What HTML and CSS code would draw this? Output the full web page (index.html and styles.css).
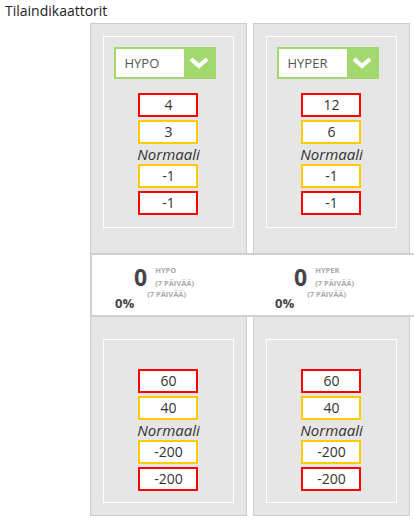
FILE: index.html
```html
<!DOCTYPE html>
<html lang="fi">
<head>
    <meta charset="UTF-8">
    <meta name="viewport" content="width=device-width, initial-scale=1.0">
    <title>Tilaindikaattorit</title>
    <link rel="stylesheet" href="styles.css">
</head>
<body>
    <div class="title">Tilaindikaattorit</div>

    <div class="board">
        <!-- Ylärivi: valinnat ja raja-arvot -->
        <div class="row">
            <div class="panel panel-top">
                <div class="inner inner-top">
                    <div class="select">
                        <span class="select-text">HYPO</span>
                        <span class="select-btn">
                            <svg width="20" height="12" viewBox="0 0 20 12"><polyline points="2,2 10,9 18,2" fill="none" stroke="#fff" stroke-width="4" stroke-linejoin="miter"/></svg>
                        </span>
                    </div>
                    <div class="limits">
                        <div class="limit red">4</div>
                        <div class="limit yellow">3</div>
                        <div class="normal">Normaali</div>
                        <div class="limit yellow">-1</div>
                        <div class="limit red">-1</div>
                    </div>
                </div>
            </div>
            <div class="panel panel-top">
                <div class="inner inner-top">
                    <div class="select">
                        <span class="select-text">HYPER</span>
                        <span class="select-btn">
                            <svg width="20" height="12" viewBox="0 0 20 12"><polyline points="2,2 10,9 18,2" fill="none" stroke="#fff" stroke-width="4" stroke-linejoin="miter"/></svg>
                        </span>
                    </div>
                    <div class="limits">
                        <div class="limit red">12</div>
                        <div class="limit yellow">6</div>
                        <div class="normal">Normaali</div>
                        <div class="limit yellow">-1</div>
                        <div class="limit red">-1</div>
                    </div>
                </div>
            </div>
        </div>

        <!-- Tilastorivi -->
        <div class="stats">
            <div class="stat">
                <div class="stat-main">
                    <span class="big">0</span>
                    <span class="labels">
                        <span>HYPO</span>
                        <span>(7 PÄIVÄÄ)</span>
                    </span>
                </div>
                <div class="stat-sub">
                    <span class="pct">0%</span>
                    <span class="small">(7 PÄIVÄÄ)</span>
                </div>
            </div>
            <div class="stat">
                <div class="stat-main">
                    <span class="big">0</span>
                    <span class="labels">
                        <span>HYPER</span>
                        <span>(7 PÄIVÄÄ)</span>
                    </span>
                </div>
                <div class="stat-sub">
                    <span class="pct">0%</span>
                    <span class="small">(7 PÄIVÄÄ)</span>
                </div>
            </div>
        </div>

        <!-- Alarivi -->
        <div class="row">
            <div class="panel panel-bottom">
                <div class="inner inner-bottom">
                    <div class="limits">
                        <div class="limit red">60</div>
                        <div class="limit yellow">40</div>
                        <div class="normal">Normaali</div>
                        <div class="limit yellow">-200</div>
                        <div class="limit red">-200</div>
                    </div>
                </div>
            </div>
            <div class="panel panel-bottom">
                <div class="inner inner-bottom">
                    <div class="limits">
                        <div class="limit red">60</div>
                        <div class="limit yellow">40</div>
                        <div class="normal">Normaali</div>
                        <div class="limit yellow">-200</div>
                        <div class="limit red">-200</div>
                    </div>
                </div>
            </div>
        </div>
    </div>
</body>
</html>
```

FILE: styles.css
```css
body {
    margin: 0;
    font-family: "Open Sans", "Noto Sans", sans-serif;
    color: #333;
    background: #fff;
    overflow: hidden;
}

.title {
    font-size: 14px;
    line-height: 18px;
    padding: 2px 5px 3px;
    color: #222;
}

.board {
    margin-left: 90px;
    width: 320px;
}

.row {
    display: grid;
    grid-template-columns: 1fr 1fr;
    gap: 6px;
}

.panel {
    background: #e6e6e6;
    border: 1px solid #ccc;
    padding: 12px 12px 0;
}

.panel-top {
    border-bottom: none;
    height: 217px;
}

.panel-bottom {
    border-top: none;
    padding-top: 22px;
    padding-bottom: 12px;
}

.inner {
    border: 1px solid #fff;
    display: flex;
    flex-direction: column;
    align-items: center;
}

.inner-top {
    padding: 10px 0 12px;
}

.inner-bottom {
    padding: 29px 0 11px;
}

.select {
    display: flex;
    width: 102px;
    height: 32px;
    box-sizing: border-box;
    border: 2px solid #a3d86f;
    background: #fff;
    margin: 0 8px 14px 0;
}

.select-text {
    flex: 1;
    font-size: 13px;
    line-height: 28px;
    padding-left: 9px;
    color: #555;
}

.select-btn {
    width: 30px;
    background: #a3d86f;
    display: flex;
    align-items: center;
    justify-content: center;
}

.limits {
    display: flex;
    flex-direction: column;
    align-items: center;
    gap: 3px;
}

.limit {
    width: 60px;
    height: 24px;
    box-sizing: border-box;
    background: #fff;
    border: 2px solid;
    text-align: center;
    font-size: 14px;
    line-height: 20px;
    color: #333;
}

.red {
    border-color: #ff0000;
}

.yellow {
    border-color: #ffcc00;
}

.normal {
    font-style: italic;
    font-size: 15px;
    line-height: 18px;
    color: #333;
    margin: -2px 0;
}

.stats {
    display: flex;
    width: 330px;
    height: 60px;
    background: #fff;
    border: 2px solid #d0d0d0;
}

.stat {
    width: 160px;
    color: #444;
}

.stat-main {
    display: flex;
    align-items: flex-start;
    padding: 8px 0 0 42px;
}

.big {
    font-size: 23px;
    font-weight: bold;
    line-height: 28px;
}

.labels {
    display: flex;
    flex-direction: column;
    gap: 4px;
    margin: 3px 0 0 8px;
    font-size: 7.5px;
    font-weight: bold;
    color: #aaa;
    line-height: 9px;
    white-space: nowrap;
}

.stat-sub {
    display: flex;
    align-items: flex-start;
    padding-left: 23px;
    margin-top: -1px;
}

.pct {
    font-size: 13px;
    font-weight: bold;
    line-height: 18px;
    margin-top: 4px;
}

.small {
    font-size: 7.5px;
    font-weight: bold;
    color: #aaa;
    line-height: 9px;
    margin-left: 13px;
    white-space: nowrap;
}
```
